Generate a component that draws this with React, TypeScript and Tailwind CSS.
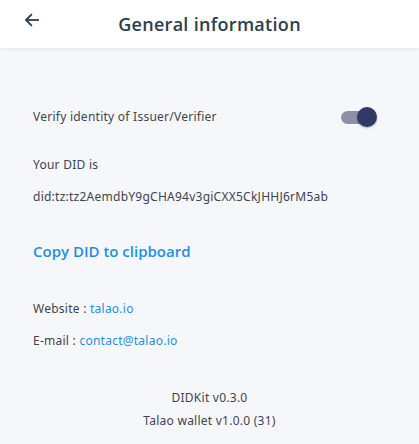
import React from 'react'

function BackArrow() {
  return (
    <svg width="18" height="18" viewBox="0 0 24 24" fill="none" stroke="#2c3e4c" strokeWidth="2.4" strokeLinecap="square">
      <path d="M20 12H5" />
      <path d="M11 5l-7 7 7 7" />
    </svg>
  )
}

export default function App() {
  const body = { fontFamily: '"Noto Sans", "Open Sans", sans-serif' }

  return (
    <div className="w-[419px] h-[444px] bg-[#f6f7fb] overflow-hidden" style={body}>
      <header className="h-[48px] bg-white shadow-[0_1px_4px_rgba(0,0,0,0.08)] flex items-center relative">
        <button className="absolute left-[23px] top-[11px]">
          <BackArrow />
        </button>
        <h1 className="w-full text-center text-[18px] font-semibold text-[#2c3e4c] tracking-[0.3px]" style={{ fontFamily: '"Open Sans", sans-serif' }}>
          General information
        </h1>
      </header>

      <main className="px-[33px] pt-[56px] text-[12px] text-[#3d4450] tracking-[0.25px]">
        <div className="flex items-center justify-between h-[26px]">
          <span>Verify identity of Issuer/Verifier</span>
          <div className="relative w-[36px] h-[20px] mr-[9px] flex items-center">
            <div className="w-[32px] h-[13px] rounded-full bg-[#8c91a7]" />
            <div className="absolute right-0 top-0 w-[20px] h-[20px] rounded-full bg-[#2f3b66] shadow-[0_1px_2px_rgba(0,0,0,0.3)]" />
          </div>
        </div>

        <p className="mt-[26px]">Your DID is</p>
        <p className="mt-[14px]">did:tz:tz2AemdbY9gCHA94v3giCXX5CkJHHJ6rM5ab</p>

        <button className="mt-[34px] text-[15px] font-semibold text-[#1e90e6] tracking-normal" style={{ fontFamily: '"Open Sans", sans-serif' }}>
          Copy DID to clipboard
        </button>

        <p className="mt-[37px]">
          Website : <span className="text-[#1e90e6]">talao.io</span>
        </p>
        <p className="mt-[14px]">
          E-mail : <span className="text-[#1e90e6]">contact@talao.io</span>
        </p>

        <div className="mt-[39px] flex flex-col items-center gap-[5px]">
          <p>DIDKit v0.3.0</p>
          <p>Talao wallet v1.0.0 (31)</p>
        </div>
      </main>
    </div>
  )
}
